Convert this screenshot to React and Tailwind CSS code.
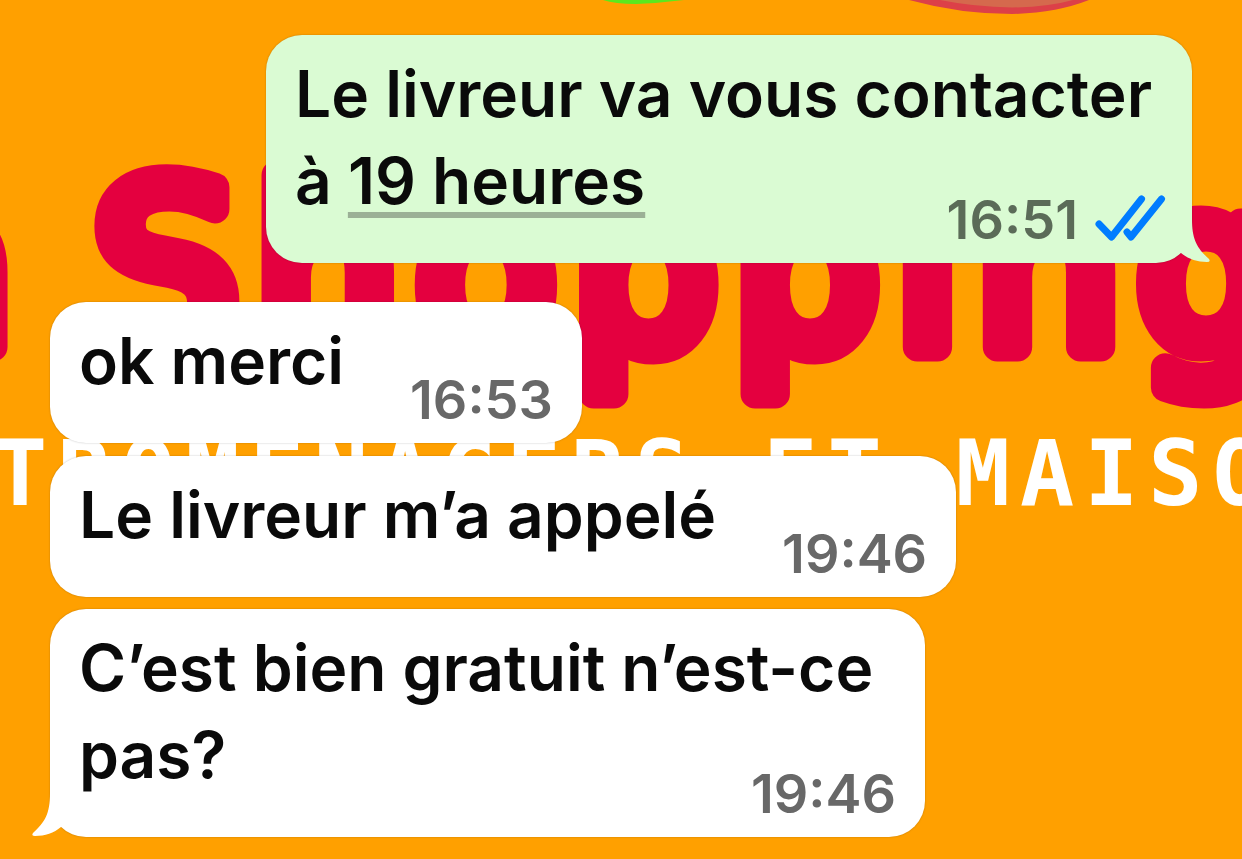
import React from "react";
import clsx from "clsx";

const messages = [
  {
    id: 1,
    mine: true,
    text: (
      <>
        Le livreur va vous contacter à{" "}
        <a href="#rappel" className="underline decoration-[#9bb096] decoration-[6px] underline-offset-[8px]">19 heures</a>
      </>
    ),
    time: "16:51",
    multiline: true,
    tail: true,
    spacing: "max-w-[926px]",
  },
  { id: 2, text: "ok merci", time: "16:53", spacing: "mt-[39px]" },
  { id: 3, text: "Le livreur m’a appelé", time: "19:46", spacing: "mt-[13px]" },
  {
    id: 4,
    text: "C’est bien gratuit n’est-ce pas?",
    time: "19:46",
    multiline: true,
    tail: true,
    spacing: "mt-[12px] max-w-[875px]",
  },
];

const Wallpaper = () => (
  <svg
    className="absolute inset-0 w-full h-full"
    viewBox="0 0 1242 859"
    preserveAspectRatio="xMinYMin slice"
    aria-hidden="true"
  >
    <path d="M603 0 Q615 4 636 4 Q660 3 684 0 Z" fill="#5ce81e" />
    <path d="M909 0 Q960 14 1012 14 Q1056 13 1089 0 Z" fill="#dc4048" />
    <path d="M940 0 Q975 7 1012 7.500 Q1048 7 1073 0 Z" fill="#d5694d" />
    {/* thick round outline gives the shop name its soft corners */}
    <g
      fill="#e4003f"
      stroke="#e4003f"
      strokeWidth="29"
      strokeLinejoin="round"
      fontFamily="'DejaVu Sans', sans-serif"
      fontSize="226"
      className="tracking-[18px]"
    >
      <text x="-131" y="347">n</text>
      <text x="94" y="347">Shopping</text>
    </g>
    <text
      x="-7"
      y="505"
      fill="#fff"
      fontFamily="'DejaVu Sans Mono', monospace"
      fontWeight="700"
      fontSize="90"
      className="tracking-[10px]"
    >
      TROMENAGERS ET MAISON
    </text>
  </svg>
);

const Tail = ({ mine }) => (
  <svg
    viewBox="0 0 36 54"
    className={clsx(
      "absolute bottom-0 w-[36px] h-[54px]",
      mine ? "-right-[19px] fill-[#dafbd3]" : "-left-[19px] -scale-x-100 fill-white"
    )}
    aria-hidden="true"
  >
    <path d="M0 0 H17 V10 C17 31 22 39 34 50 Q36 53 32 53 C22 53 13 50 6 44 L0 38 Z" />
  </svg>
);

const ReadTicks = () => (
  <svg
    viewBox="0 0 71 47"
    className="w-[71px] h-[47px] overflow-visible fill-none stroke-[#007cff]"
    strokeWidth="7"
    strokeLinecap="round"
    strokeLinejoin="round"
    role="img"
    aria-label="Lu"
  >
    <path d="M4 27 L16.500 40 L46.500 2" />
    <path d="M32 35 L36 40 L66.500 2" />
  </svg>
);

const Bubble = ({ message }) => {
  const { mine, text, time, multiline, tail, spacing } = message;

  return (
    <li
      className={clsx(
        "relative flex w-fit rounded-[36px] pt-[15px] pb-[16px] shadow-[0_0_2px_rgba(0,0,0,0.25)]",
        mine ? "self-end bg-[#dafbd3] pl-[29px] pr-[26px]" : "self-start bg-white px-[29px]",
        multiline ? "flex-col" : "items-end gap-[66px]",
        spacing
      )}
    >
      {tail && <Tail mine={mine} />}
      <p className="relative pb-[23px] text-[64px] leading-[87px] font-semibold text-[#0a0a0a]">{text}</p>
      <div
        className={clsx(
          "relative flex items-center gap-[17px] text-[54px] leading-[54px] font-semibold",
          mine ? "text-[#5b6b58]" : "text-[#686868]",
          multiline && "self-end -mt-[54px]"
        )}
      >
        <time>{time}</time>
        {mine && <ReadTicks />}
      </div>
    </li>
  );
};

const App = () => {
  return (
    <main className="relative min-h-screen overflow-hidden bg-[#ffa000] font-['Inter',sans-serif]">
      <Wallpaper />
      <ul className="relative flex flex-col px-[50px] pt-[35px] pb-[22px]">
        {messages.map((m) => (
          <Bubble key={m.id} message={m} />
        ))}
      </ul>
    </main>
  );
};

export default App;
